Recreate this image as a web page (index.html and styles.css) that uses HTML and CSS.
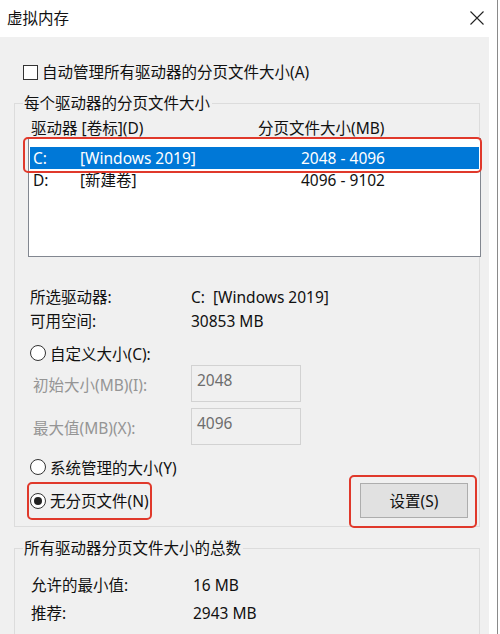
FILE: index.html
```html
<!DOCTYPE html>
<html lang="zh-CN">
<head>
<meta charset="utf-8">
<title>虚拟内存</title>
<link rel="stylesheet" href="styles.css">
</head>
<body>
<div class="window">
  <div class="titlebar">
    <span class="title">虚拟内存</span>
    <svg class="close" width="16" height="16" viewBox="0 0 16 16"><path d="M1.5 1.5 L14.5 14.5 M14.5 1.5 L1.5 14.5" stroke="#222" stroke-width="1.1" fill="none"/></svg>
  </div>
  <div class="content">
    <label class="check-row"><span class="checkbox"></span>自动管理所有驱动器的分页文件大小(A)</label>

    <fieldset class="group group1">
      <legend>每个驱动器的分页文件大小</legend>
      <div class="list-head"><span>驱动器 [卷标](D)</span><span>分页文件大小(MB)</span></div>
      <div class="listbox">
        <div class="row selected"><span>C:</span><span>[Windows 2019]</span><span>2048 - 4096</span></div>
        <div class="row"><span>D:</span><span>[新建卷]</span><span>4096 - 9102</span></div>
        <div class="mark mark-list"></div>
      </div>

      <div class="info">
        <span>所选驱动器:</span><span>C:&nbsp; [Windows 2019]</span>
        <span>可用空间:</span><span>30853 MB</span>
      </div>

      <div class="radio-row r-custom"><span class="radio"></span>自定义大小(C):</div>
      <div class="field-row f1"><span class="field-label">初始大小(MB)(I):</span><span class="input">2048</span></div>
      <div class="field-row f2"><span class="field-label">最大值(MB)(X):</span><span class="input">4096</span></div>
      <div class="radio-row r-system"><span class="radio"></span>系统管理的大小(Y)</div>
      <div class="bottom-row">
        <div class="radio-row r-none"><span class="radio checked"></span>无分页文件(N)<div class="mark mark-radio"></div></div>
        <div class="button">设置(S)<div class="mark mark-btn"></div></div>
      </div>
    </fieldset>

    <fieldset class="group group2">
      <legend>所有驱动器分页文件大小的总数</legend>
      <div class="totals">
        <span>允许的最小值:</span><span>16 MB</span>
        <span>推荐:</span><span>2943 MB</span>
      </div>
    </fieldset>
  </div>
</div>
</body>
</html>
```

FILE: styles.css
```css
* { box-sizing: border-box; }
html, body {
  margin: 0;
  padding: 0;
  background: #ffffff;
}
body {
  width: 500px;
  height: 634px;
  overflow: hidden;
  font-family: "Noto Sans", "Noto Sans CJK SC", sans-serif;
  font-size: 15.5px;
  color: #111;
}
.window {
  width: 498px;
  height: 634px;
  border-right: 1px solid #8a8a8a;
  display: flex;
  flex-direction: column;
  background: #fff;
}
.titlebar {
  height: 37px;
  flex: none;
  display: flex;
  align-items: center;
  justify-content: space-between;
  padding: 0 12px 0 7px;
  background: #fff;
}
.title {
  font-size: 15.5px;
  line-height: 20px;
  color: #111;
  margin-top: -1px;
}
.close { margin-top: -2px; }
.content {
  flex: 1;
  width: 489px;
  background: #f0f0f0;
  padding-top: 25px;
}
.check-row {
  display: flex;
  align-items: center;
  height: 20px;
  padding-left: 23px;
  line-height: 20px;
}
.checkbox {
  width: 15px;
  height: 15px;
  border: 1px solid #333;
  background: #fff;
  margin-right: 4px;
}
.group {
  margin: 0 0 0 14px;
  width: 466px;
  border: 1px solid #dcdcdc;
  padding: 0;
  min-width: 0;
}
.group legend {
  margin-left: 8px;
  padding: 0 2px 0 1px;
  line-height: 20px;
}
.group1 { margin-top: 11px; padding-bottom: 8px; }
.list-head {
  display: grid;
  grid-template-columns: 227px auto;
  padding-left: 16px;
  margin-top: 5px;
  height: 20px;
  line-height: 20px;
}
.listbox {
  position: relative;
  margin-left: 13px;
  width: 453px;
  height: 119px;
  border: 1px solid #828790;
  background: #fff;
  padding: 8px 1px 0 1px;
}
.row {
  display: grid;
  grid-template-columns: 47px 221px auto;
  height: 22px;
  line-height: 22px;
  padding-left: 3px;
}
.row.selected {
  background: #0078d7;
  color: #fff;
}
.mark {
  position: absolute;
  border: 2px solid #e0392b;
  border-radius: 5px;
  pointer-events: none;
}
.mark-list { left: -6px; top: -2px; width: 459px; height: 36px; }
.info {
  display: grid;
  grid-template-columns: 161px auto;
  padding-left: 15px;
  margin-top: 28px;
  line-height: 24px;
}
.radio-row {
  display: flex;
  align-items: center;
  height: 24px;
  padding-left: 15px;
  position: relative;
}
.radio {
  width: 16px;
  height: 16px;
  border: 1px solid #333;
  border-radius: 50%;
  background: #fff;
  margin-right: 4px;
  display: flex;
  align-items: center;
  justify-content: center;
}
.radio.checked::after {
  content: "";
  width: 8px;
  height: 8px;
  border-radius: 50%;
  background: #222;
}
.r-custom { margin-top: 8px; }
.field-row {
  display: flex;
  align-items: center;
  padding-left: 18px;
  color: #959595;
}
.f1 { margin-top: 0; }
.f2 { margin-top: 6px; }
.field-label { width: 158px; padding-top: 2px; }
.input {
  width: 110px;
  height: 37px;
  border: 1px solid #d2d2d2;
  background: #f0f0f0;
  color: #6d6d6d;
  padding: 3px 0 0 5px;
  line-height: 22px;
  align-self: flex-start;
}
.r-system { margin-top: 10px; }
.bottom-row {
  display: flex;
  justify-content: space-between;
  align-items: center;
  margin-top: 4px;
  padding-right: 11px;
}
.r-none { height: 35px; }
.mark-radio { left: 12px; top: -1px; width: 125px; height: 38px; }
.button {
  position: relative;
  width: 108px;
  height: 35px;
  border: 1px solid #adadad;
  background: #e1e1e1;
  display: flex;
  align-items: center;
  justify-content: center;
}
.mark-btn { left: -12px; top: -9px; width: 128px; height: 53px; }
.group2 { margin-top: 11px; padding-bottom: 0; border-bottom: none; height: 120px; }
.totals {
  display: grid;
  grid-template-columns: 162px auto;
  padding-left: 16px;
  margin-top: 13px;
  line-height: 28px;
}
```
